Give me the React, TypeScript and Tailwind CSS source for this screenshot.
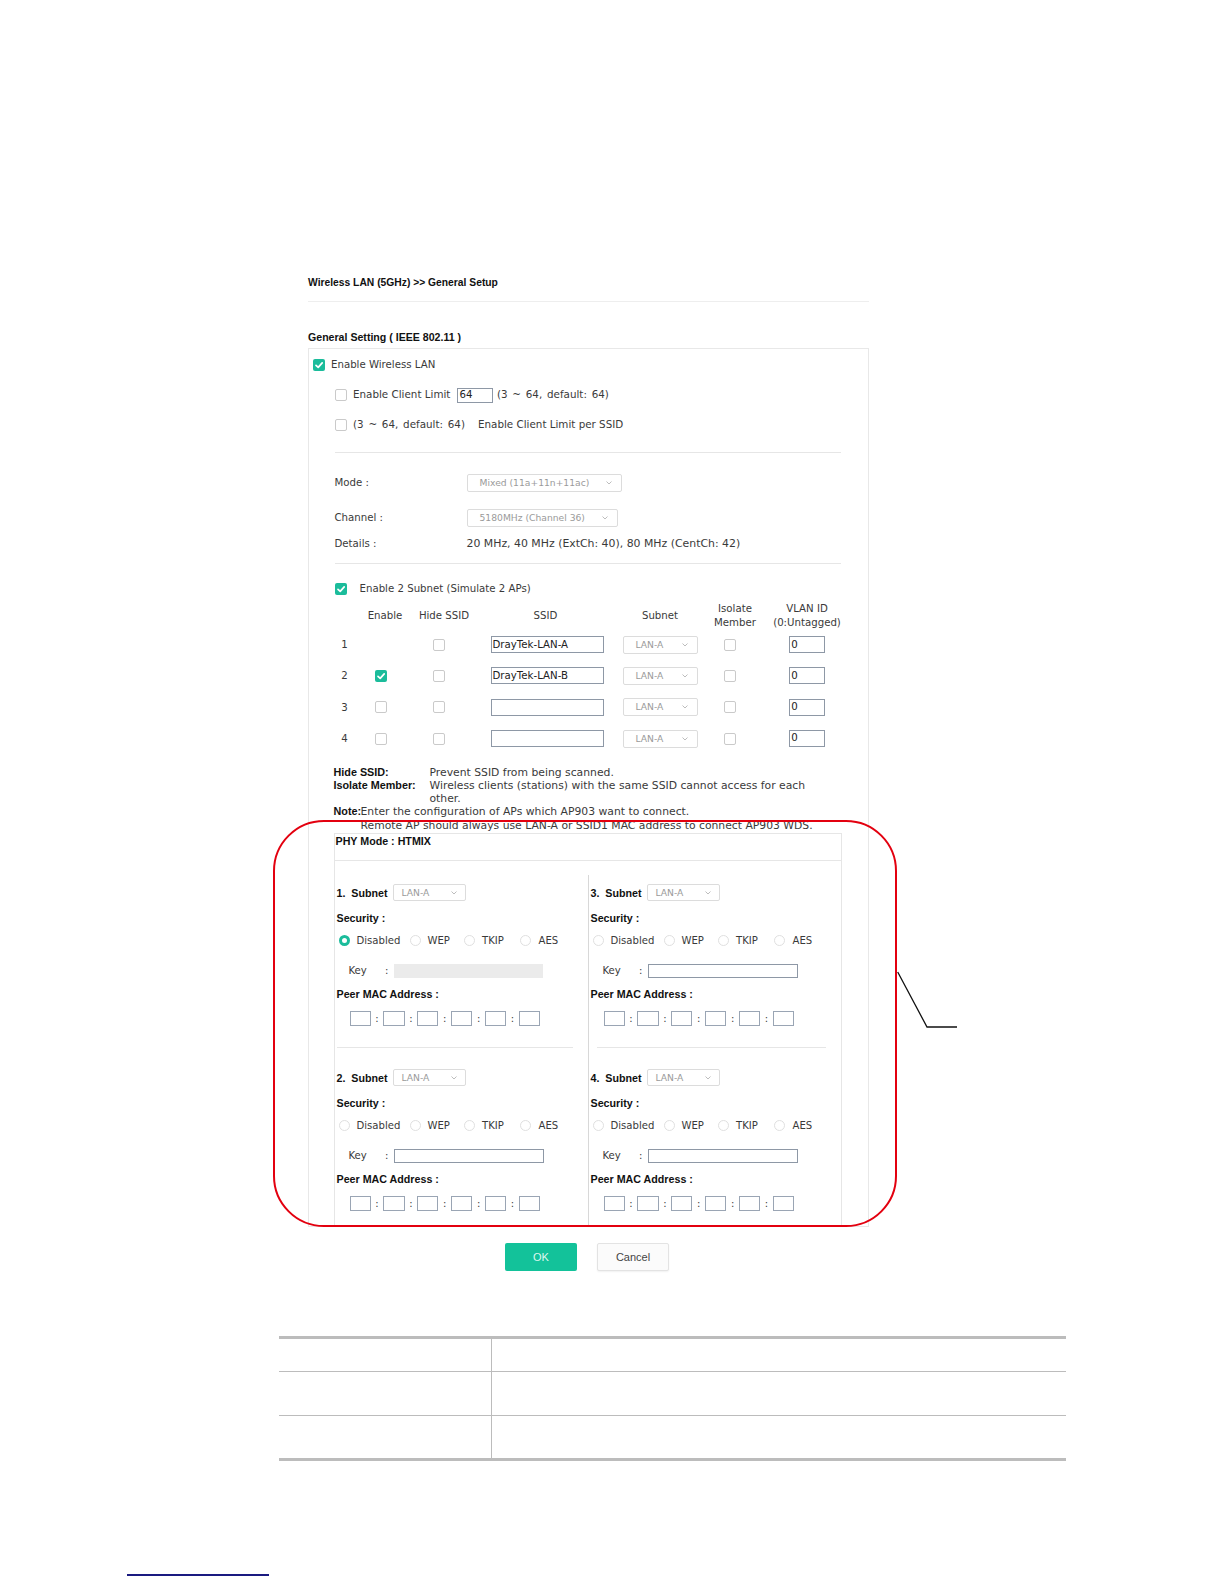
import React from 'react'

const sans = "font-['DejaVu_Sans',Verdana,sans-serif]"
const arial = "font-['Liberation_Sans',Arial,sans-serif]"

function Check({ on = false }: { on?: boolean }) {
  if (on)
    return (
      <span className="inline-flex h-[12px] w-[12px] shrink-0 items-center justify-center rounded-[2px] bg-[#1bbc9b]">
        <svg viewBox="0 0 12 12" className="h-[12px] w-[12px]">
          <path d="M3 6.3 L5.2 8.4 L9.2 3.9" fill="none" stroke="#fff" strokeWidth="1.7" strokeLinecap="round" strokeLinejoin="round" />
        </svg>
      </span>
    )
  return <span className="inline-block h-[12px] w-[12px] shrink-0 rounded-[2px] border border-[#cacaca] bg-white" />
}

function Radio({ on = false }: { on?: boolean }) {
  return on ? (
    <span className="inline-block h-[11px] w-[11px] shrink-0 rounded-full border-[3px] border-[#1bbc9b] bg-white" />
  ) : (
    <span className="inline-block h-[11px] w-[11px] shrink-0 rounded-full border border-[#e0e0e0] bg-white" />
  )
}

function Chevron() {
  return (
    <svg viewBox="0 0 6 4" className="h-[4px] w-[6px]">
      <path d="M0.5 0.5 L3 3 L5.5 0.5" fill="none" stroke="#b5b5b5" strokeWidth="0.9" />
    </svg>
  )
}

function Select({ text, className }: { text: string; className: string }) {
  return (
    <div className={`flex items-center justify-between rounded-[2px] border border-[#dcdcdc] bg-white text-[9.2px] text-[#9a9a9a] ${sans} ${className}`}>
      <span>{text}</span>
      <Chevron />
    </div>
  )
}

function Field({ value = '', className }: { value?: string; className: string }) {
  return (
    <div className={`flex items-center border border-[#8e98a6] bg-white pl-[1px] text-[10.2px] leading-none text-[#222] ${sans} ${className}`}>
      {value}
    </div>
  )
}

const rows = [
  { n: 1, en: null as boolean | null, ssid: 'DrayTek-LAN-A' },
  { n: 2, en: true, ssid: 'DrayTek-LAN-B' },
  { n: 3, en: false, ssid: '' },
  { n: 4, en: false, ssid: '' },
]

const cols = 'grid-cols-[20px_53px_63px_150px_79px_61px_93px]'

function SubnetBlock({ n, active = false }: { n: number; active?: boolean }) {
  const label = `${arial} text-[10.7px] font-bold text-[#111]`
  return (
    <div>
      <div className="flex h-[20px] items-center">
        <span className={`w-[56px] ${label}`}>{n}.&nbsp; Subnet</span>
        <Select text="LAN-A" className="h-[17px] w-[73px] pl-[8px] pr-[8px]" />
      </div>
      <div className={`mt-[5px] flex h-[20px] items-center ${label}`}>Security :</div>
      <div className="mt-[2.5px] flex h-[20px] items-center pl-[2px] text-[10.1px]">
        <div className="flex w-[71px] items-center gap-[7px]">
          <Radio on={active} />
          <span>Disabled</span>
        </div>
        <div className="flex w-[54.5px] items-center gap-[7px]">
          <Radio />
          <span>WEP</span>
        </div>
        <div className="flex w-[55.5px] items-center gap-[7px]">
          <Radio />
          <span>TKIP</span>
        </div>
        <div className="flex items-center gap-[8px]">
          <Radio />
          <span>AES</span>
        </div>
      </div>
      <div className="mt-[10.5px] flex h-[20px] items-center pl-[12px] text-[10.1px]">
        <span className="w-[36.5px]">Key</span>
        <span className="w-[9px]">:</span>
        {active ? (
          <div className="h-[14px] w-[149px] bg-[#ebebeb]" />
        ) : (
          <Field className="h-[14.5px] w-[150px]" />
        )}
      </div>
      <div className={`mt-[3px] flex h-[20px] items-center ${label}`}>Peer MAC Address :</div>
      <div className="mt-[4.5px] flex h-[20px] items-center pl-[13px] text-[10px]">
        {[0, 1, 2, 3, 4, 5].map((i) => (
          <React.Fragment key={i}>
            {i > 0 && <span className="w-[12.7px] text-center">:</span>}
            <div className="h-[15.5px] w-[21.2px] border border-[#9aa5b4] bg-white" />
          </React.Fragment>
        ))}
      </div>
    </div>
  )
}

export default function App() {
  const bold = `${arial} font-bold text-[#111]`
  return (
    <div className={`relative h-[1584px] w-[1224px] overflow-hidden bg-white text-[#3a3a3a] ${sans}`}>
      <div className="pt-[276px]">
        <div className="ml-[308px] w-[561px]">
          {/* page title */}
          <div className={`h-[14px] text-[10.3px] leading-[14px] ${bold}`}>Wireless LAN (5GHz) &gt;&gt; General Setup</div>
          <div className="mt-[11px] h-px bg-[#eeeeee]" />
          <div className={`mt-[28px] h-[14px] text-[10.6px] leading-[14px] ${bold}`}>General Setting ( IEEE 802.11 )</div>

          {/* main panel */}
          <div className="mt-[4px] border border-[#e8e8e8] text-[10.2px]">
            <div className="mt-[6px] flex h-[20px] items-center gap-[6px] pl-[4px]">
              <Check on />
              <span>Enable Wireless LAN</span>
            </div>
            <div className="mt-[10px] flex h-[20px] items-center pl-[26px] text-[10.35px]">
              <Check />
              <span className="ml-[6px]">Enable Client Limit</span>
              <Field value="64" className="ml-[7px] h-[15px] w-[35.5px]" />
              <span className="ml-[4px] [word-spacing:1.5px]">(3 ~ 64, default: 64)</span>
            </div>
            <div className="mt-[10px] flex h-[20px] items-center pl-[26px] text-[10.35px]">
              <Check />
              <span className="ml-[6px] [word-spacing:1.5px]">(3 ~ 64, default: 64)</span>
              <span className="ml-[13px]">Enable Client Limit per SSID</span>
            </div>
            <div className="ml-[25.5px] mt-[17px] h-px w-[506px] bg-[#e6e6e6]" />

            <div className="ml-[25.5px] mt-[21px] flex h-[18px] items-center">
              <span className="w-[132px]">Mode :</span>
              <Select text="Mixed (11a+11n+11ac)" className="h-[18px] w-[155px] pl-[12px] pr-[9px]" />
            </div>
            <div className="ml-[25.5px] mt-[17px] flex h-[18px] items-center">
              <span className="w-[132px]">Channel :</span>
              <Select text="5180MHz (Channel 36)" className="h-[18px] w-[151.5px] pl-[12px] pr-[9px]" />
            </div>
            <div className="ml-[25.5px] mt-[8px] flex h-[18px] items-center">
              <span className="w-[132px]">Details :</span>
              <span className="text-[10.9px]">20 MHz, 40 MHz (ExtCh: 40), 80 MHz (CentCh: 42)</span>
            </div>
            <div className="ml-[25.5px] mt-[10px] h-px w-[506px] bg-[#e6e6e6]" />

            <div className="ml-[25.5px] mt-[15px] flex h-[20px] items-center gap-[13px]">
              <Check on />
              <span>Enable 2 Subnet (Simulate 2 APs)</span>
            </div>

            {/* subnet table */}
            <div className="ml-[25.5px] mt-[3px]">
              <div className={`grid h-[27px] ${cols} items-center text-center leading-[13.5px]`}>
                <span />
                <span className="pl-[8px]">Enable</span>
                <span className="pl-[10px]">Hide SSID</span>
                <span>SSID</span>
                <span>Subnet</span>
                <span className="pl-[10px]">
                  Isolate
                  <br />
                  Member
                </span>
                <span>
                  VLAN ID
                  <br />
                  (0:Untagged)
                </span>
              </div>
              {rows.map((r) => (
                <div key={r.n} className={`grid h-[31.3px] ${cols} items-center`}>
                  <span className="text-center">{r.n}</span>
                  <span className="flex justify-center">{r.en !== null && <Check on={r.en} />}</span>
                  <span className="flex justify-center">
                    <Check />
                  </span>
                  <span className="pl-[20px]">
                    <Field value={r.ssid} className="h-[17px] w-[113px]" />
                  </span>
                  <span className="pl-[2px]">
                    <Select text="LAN-A" className="h-[18px] w-[75px] pl-[12px] pr-[9px]" />
                  </span>
                  <span className="flex justify-center">
                    <Check />
                  </span>
                  <span className="flex justify-center">
                    <Field value="0" className="h-[17px] w-[35.5px]" />
                  </span>
                </div>
              ))}
            </div>

            {/* notes */}
            <div className="ml-[24.5px] mt-[12px] text-[10.8px] leading-[13.1px]">
              <div className="flex">
                <span className={`w-[96px] text-[10.8px] ${bold}`}>Hide SSID:</span>
                <span>Prevent SSID from being scanned.</span>
              </div>
              <div className="flex">
                <span className={`w-[96px] text-[10.8px] ${bold}`}>Isolate Member:</span>
                <span>
                  Wireless clients (stations) with the same SSID cannot access for each
                  <br />
                  other.
                </span>
              </div>
              <div className="flex">
                <span className={`w-[27px] text-[10.8px] ${bold}`}>Note:</span>
                <span>
                  Enter the configuration of APs which AP903 want to connect.
                  <br />
                  Remote AP should always use LAN-A or SSID1 MAC address to connect AP903 WDS.
                </span>
              </div>
            </div>

            {/* PHY mode panel */}
            <div className="ml-[24.5px] mt-px w-[508px] border-x border-t border-[#e6e6e6]">
              <div className={`h-[14px] pl-[1px] text-[10.7px] leading-[14px] ${bold}`}>PHY Mode : HTMIX</div>
              <div className="mt-[12.3px] h-px bg-[#e6e6e6]" />
              <div className="mt-[14px] grid grid-cols-[253px_1fr]">
                <div className="pl-[2px] pt-[8px]">
                  <SubnetBlock n={1} active />
                  <div className="mt-[18.5px] h-px w-[236.5px] bg-[#e6e6e6]" />
                  <div className="pb-[13px] pt-[20px]">
                    <SubnetBlock n={2} />
                  </div>
                </div>
                <div className="border-l border-[#d8d8d8] pl-[2px] pt-[8px]">
                  <SubnetBlock n={3} />
                  <div className="ml-[6px] mt-[18.5px] h-px w-[229.5px] bg-[#e6e6e6]" />
                  <div className="pb-[13px] pt-[20px]">
                    <SubnetBlock n={4} />
                  </div>
                </div>
              </div>
            </div>
          </div>

          {/* buttons */}
          <div className="ml-[197px] mt-[15.5px] flex gap-[20px]">
            <button className={`h-[28px] w-[72px] rounded-[2px] bg-[#13c29a] text-[11px] text-[#dff7ef] ${arial}`}>OK</button>
            <button className={`h-[28px] w-[72px] rounded-[2px] border border-[#e3e3e3] bg-[#fbfbfb] text-[11px] text-[#444] shadow-[0_1px_2px_rgba(0,0,0,0.06)] ${arial}`}>
              Cancel
            </button>
          </div>
        </div>

        {/* description table */}
        <div className="ml-[279px] mt-[65px] w-[787px] border-y-[3px] border-[#bcbcbc]">
          <div className="grid h-[32px] grid-cols-[213px_1fr]">
            <div className="border-r border-[#bcbcbc]" />
            <div />
          </div>
          <div className="grid h-[44px] grid-cols-[213px_1fr] border-t border-[#bcbcbc]">
            <div className="border-r border-[#bcbcbc]" />
            <div />
          </div>
          <div className="grid h-[43px] grid-cols-[213px_1fr] border-t border-[#bcbcbc]">
            <div className="border-r border-[#bcbcbc]" />
            <div />
          </div>
        </div>

        <div className="ml-[127px] mt-[113px] h-[2px] w-[142px] bg-[#1a1a80]" />
      </div>

      {/* red highlight */}
      <div className="pointer-events-none absolute left-[273px] top-[820px] h-[407px] w-[624px] rounded-[51px] border-[2.5px] border-[#e3000f]" />

      {/* callout line */}
      <svg className="pointer-events-none absolute left-[890px] top-[965px] h-[70px] w-[80px]" viewBox="0 0 80 70">
        <polyline points="7.7,7 37,62 67,62" fill="none" stroke="#111" strokeWidth="1.3" />
      </svg>
    </div>
  )
}
